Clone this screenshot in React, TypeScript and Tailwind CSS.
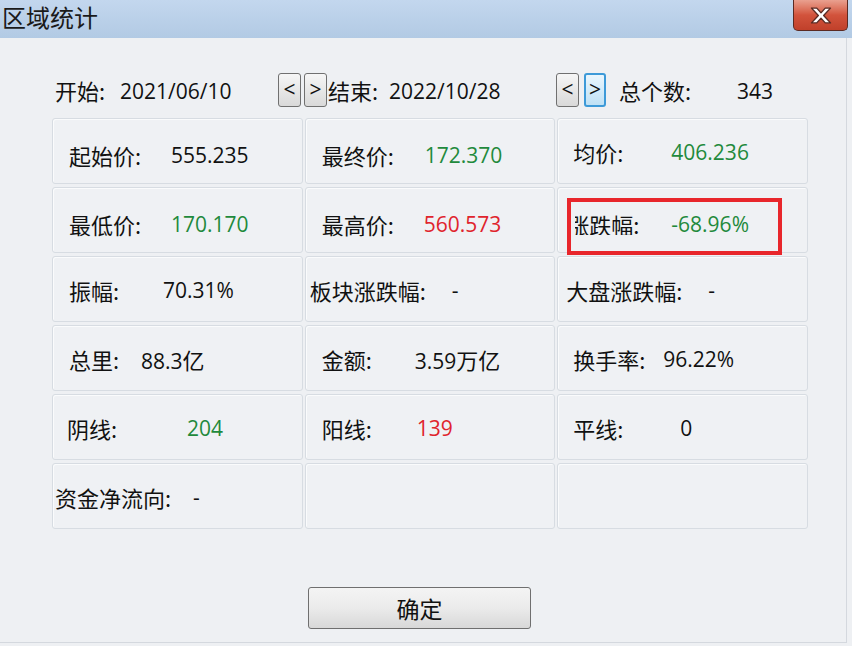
import React from 'react';

type Cell = {
  label: string;
  value?: string;
  unit?: string;
  pad: number;
  valueAt?: number;
  color?: string;
  clip?: boolean;
  low?: boolean;
};

const GREEN = 'text-[#1f8a3c]';
const RED = 'text-[#e0242c]';

const cells: Cell[] = [
  { label: '起始价:', value: '555.235', pad: 16, valueAt: 118, low: true },
  { label: '最终价:', value: '172.370', pad: 16, valueAt: 119, color: GREEN, low: true },
  { label: '均价:', value: '406.236', pad: 15, valueAt: 113, color: GREEN },
  { label: '最低价:', value: '170.170', pad: 16, valueAt: 118, color: GREEN, low: true },
  { label: '最高价:', value: '560.573', pad: 16, valueAt: 118, color: RED, low: true },
  { label: '涨跌幅:', value: '-68.96%', pad: 17, valueAt: 113, color: GREEN, clip: true, low: true },
  { label: '振幅:', value: '70.31%', pad: 16, valueAt: 110 },
  { label: '板块涨跌幅:', value: '-', pad: 4, valueAt: 146 },
  { label: '大盘涨跌幅:', value: '-', pad: 8, valueAt: 150 },
  { label: '总里:', value: '88.3', unit: '亿', pad: 16, valueAt: 88 },
  { label: '金额:', value: '3.59', unit: '万亿', pad: 16, valueAt: 109 },
  { label: '换手率:', value: '96.22%', pad: 15, valueAt: 105 },
  { label: '阴线:', value: '204', pad: 14, valueAt: 134, color: GREEN },
  { label: '阳线:', value: '139', pad: 16, valueAt: 111, color: RED },
  { label: '平线:', value: '0', pad: 15, valueAt: 122 },
  { label: '资金净流向:', value: '-', pad: 2, valueAt: 140 },
  { label: '', pad: 0 },
  { label: '', pad: 0 },
];

const cjk = "[font-family:'Noto_Sans_CJK_SC',sans-serif]";
const num = "[font-family:'Open_Sans','Noto_Sans_CJK_SC',sans-serif]";

function ArrowButton({ dir, active }: { dir: '<' | '>'; active?: boolean }) {
  return (
    <div
      className={
        active
          ? 'flex h-[34px] w-[22px] items-center justify-center rounded-[3px] border-2 border-[#3d9ad8] bg-gradient-to-b from-[#eaf6fd] to-[#bfe1f5] text-[21px] text-[#111] ' + num
          : 'flex h-[34px] w-[23px] items-center justify-center rounded-[3px] border border-[#707070] bg-gradient-to-b from-[#f6f6f6] to-[#d9d9d9] text-[21px] text-[#111] ' + num
      }
    >
      {dir}
    </div>
  );
}

function StatCell({ cell }: { cell: Cell }) {
  return (
    <div
      className={
        'flex h-[66px] items-center rounded-[3px] border border-[#d7dce2] bg-[#eff1f4] shadow-[inset_1px_1px_0_#fafbfc] ' +
        (cell.low ? 'pt-[8px]' : 'pt-[2px]')
      }
    >
      {cell.label && (
        <>
          <div
            className={'shrink-0 text-[22px] leading-none text-[#111] ' + cjk}
            style={{ marginLeft: cell.pad, width: (cell.valueAt ?? 0) - cell.pad }}
          >
            {cell.clip ? (
              <span className="inline-block overflow-hidden align-top">
                <span className="-ml-[8px] inline-block">{cell.label}</span>
              </span>
            ) : (
              cell.label
            )}
          </div>
          <div className={'whitespace-nowrap pt-[1px] text-[21px] leading-none ' + (cell.color ?? 'text-[#111]') + ' ' + num}>
            {cell.value}
            {cell.unit && <span className={'text-[22px] ' + cjk}>{cell.unit}</span>}
          </div>
        </>
      )}
    </div>
  );
}

export default function App() {
  return (
    <div className="relative h-[646px] w-[852px] overflow-hidden bg-[#eef0f3]">
      {/* title bar */}
      <div className="flex h-[38px] items-start justify-between bg-gradient-to-b from-[#c3d7ee] to-[#b2cae4]">
        <div className={'pl-[2px] pt-[2px] text-[24px] leading-[30px] text-[#1a1a1a] ' + cjk}>区域统计</div>
        <div className="mr-[4px] flex h-[31px] w-[55px] items-center justify-center rounded-b-[5px] border border-t-0 border-[#5b2a22] bg-gradient-to-b from-[#e9a08f] via-[#d2533c] to-[#c0402a]">
          <svg width="28" height="19" viewBox="0 0 26 18">
            <path
              d="M4 2 L9 2 L13 6.5 L17 2 L22 2 L15.5 9 L22 16 L17 16 L13 11.5 L9 16 L4 16 L10.5 9 Z"
              fill="#fff"
              stroke="#5a2a22"
              strokeWidth="1.3"
              strokeLinejoin="round"
            />
          </svg>
        </div>
      </div>

      {/* body */}
      <div className="mr-[5px] mb-[3px] h-[605px] border-r border-b border-[#d4d8de]">
        <div className="flex items-center pl-[55px] pt-[35px] text-[#111]">
          <span className={'w-[65px] text-[22px] ' + cjk}>开始:</span>
          <span className={'w-[158px] translate-y-[2px] text-[21px] ' + num}>2021/06/10</span>
          <div className="flex gap-[3px]">
            <ArrowButton dir="<" />
            <ArrowButton dir=">" />
          </div>
          <span className={'ml-[1px] w-[61px] text-[22px] ' + cjk}>结束:</span>
          <span className={'w-[167px] translate-y-[2px] text-[21px] ' + num}>2022/10/28</span>
          <div className="flex gap-[5px]">
            <ArrowButton dir="<" />
            <ArrowButton dir=">" active />
          </div>
          <span className={'ml-[13px] w-[118px] text-[22px] ' + cjk}>总个数:</span>
          <span className={'translate-y-[2px] text-[21px] ' + num}>343</span>
        </div>

        <div className="relative ml-[52px] mt-[11px] grid w-[756px] grid-cols-3 gap-x-[2px] gap-y-[3px]">
          {cells.map((c, i) => (
            <StatCell key={i} cell={c} />
          ))}
          {/* red annotation box */}
          <div className="pointer-events-none absolute left-[515px] top-[80px] h-[57px] w-[215px] border-[4px] border-[#e8262b]" />
        </div>

        <div className="mt-[58px] flex justify-center pr-[7px]">
          <button
            className={
              'h-[42px] w-[223px] rounded-[3px] border border-[#6f6f6f] bg-gradient-to-b from-[#f4f4f4] via-[#ebebeb] to-[#d8d8d8] text-[23px] text-[#111] ' +
              cjk
            }
          >
            确定
          </button>
        </div>
      </div>
    </div>
  );
}
